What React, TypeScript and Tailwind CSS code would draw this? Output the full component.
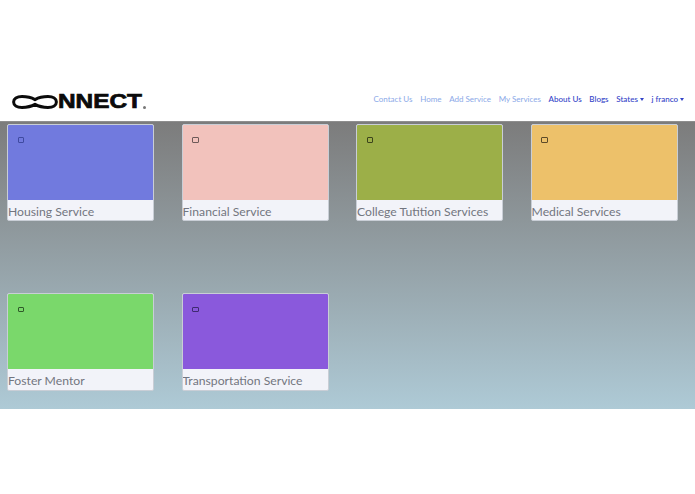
const services = [
  { label: "Housing Service", color: "bg-[#717ade]", box: "border-[#3f4aa0]" },
  { label: "Financial Service", color: "bg-[#f2c2bc]", box: "border-[#6e5a58]" },
  { label: "College Tutition Services", color: "bg-[#9caf48]", box: "border-[#3c441c]" },
  { label: "Medical Services", color: "bg-[#edc16a]", box: "border-[#5c4a28]" },
  { label: "Foster Mentor", color: "bg-[#7ad86b]", box: "border-[#2f5a29]" },
  { label: "Transportation Service", color: "bg-[#8a59dc]", box: "border-[#3f2a70]" },
];

const links = [
  { label: "Contact Us", dim: true },
  { label: "Home", dim: true },
  { label: "Add Service", dim: true },
  { label: "My Services", dim: true },
  { label: "About Us" },
  { label: "Blogs" },
  { label: "States", caret: true },
  { label: "j franco", caret: true },
];

function Logo() {
  return (
    <div className="mt-[2px] flex items-center">
      <svg width="46" height="14" viewBox="0 0 46 14" className="shrink-0">
        <path
          d="M23 4.600C19 2.400 14 1.600 10 1.600 4.800 1.600 1.600 3.800 1.600 7s3.200 5.400 8.400 5.400c4 0 9-.8 13-3 4 2.200 9 3 13 3 5.200 0 8.400-2.200 8.400-5.400s-3.200-5.400-8.400-5.400c-4 0-9 .8-13 3z"
          fill="none"
          stroke="#0b0b0b"
          strokeWidth="3"
        />
      </svg>
      <span className="w-[85px] origin-left scale-x-[1.25] font-['Liberation_Sans',sans-serif] text-[19.5px] leading-none font-bold text-[#0b0b0b] [-webkit-text-stroke:0.7px_#0b0b0b]">
        NNECT
      </span>
      <span className="mt-[11px] h-[3px] w-[3px] rounded-full bg-[#777]" />
    </div>
  );
}

export default function App() {
  return (
    <div className="flex min-h-[494px] flex-col overflow-hidden bg-white">
      <div className="h-[81px]" />
      <nav className="flex h-[40px] items-center justify-between pr-[11px] pl-[12px] font-['Lato',sans-serif] text-[8px]">
        <Logo />
        <ul className="mb-[4px] flex items-center gap-[7.7px]">
          {links.map((link) => (
            <li
              key={link.label}
              className={`flex items-center gap-[2px] ${link.dim ? "text-[#8ba9e8]" : "font-medium text-[#3344c8]"}`}
            >
              {link.label}
              {link.caret && (
                <span className="h-0 w-0 border-x-[2.5px] border-t-[3px] border-x-transparent border-t-[#3344c8]" />
              )}
            </li>
          ))}
        </ul>
      </nav>
      <main className="h-[288px] border-t border-[#8e8e8e] bg-gradient-to-b from-[#7c7c7c] to-[#aecad6] pt-[1.5px] pl-[7px]">
        <div className="grid grid-cols-[repeat(4,174.5px)] gap-y-[72px]">
          {services.map((s) => (
            <div
              key={s.label}
              className="h-[97.5px] w-[147px] overflow-hidden rounded-[2px] border border-[#c9ced6] bg-[#f2f3f9]"
            >
              <div className={`h-[75px] pt-[12.5px] pl-[9.5px] ${s.color}`}>
                <div className={`h-[5.5px] w-[6.5px] rounded-[1px] border ${s.box}`} />
              </div>
              <div className="font-['Lato',sans-serif] text-[12.2px] leading-[23px] whitespace-nowrap text-[#72767f]">
                {s.label}
              </div>
            </div>
          ))}
        </div>
      </main>
    </div>
  );
}
